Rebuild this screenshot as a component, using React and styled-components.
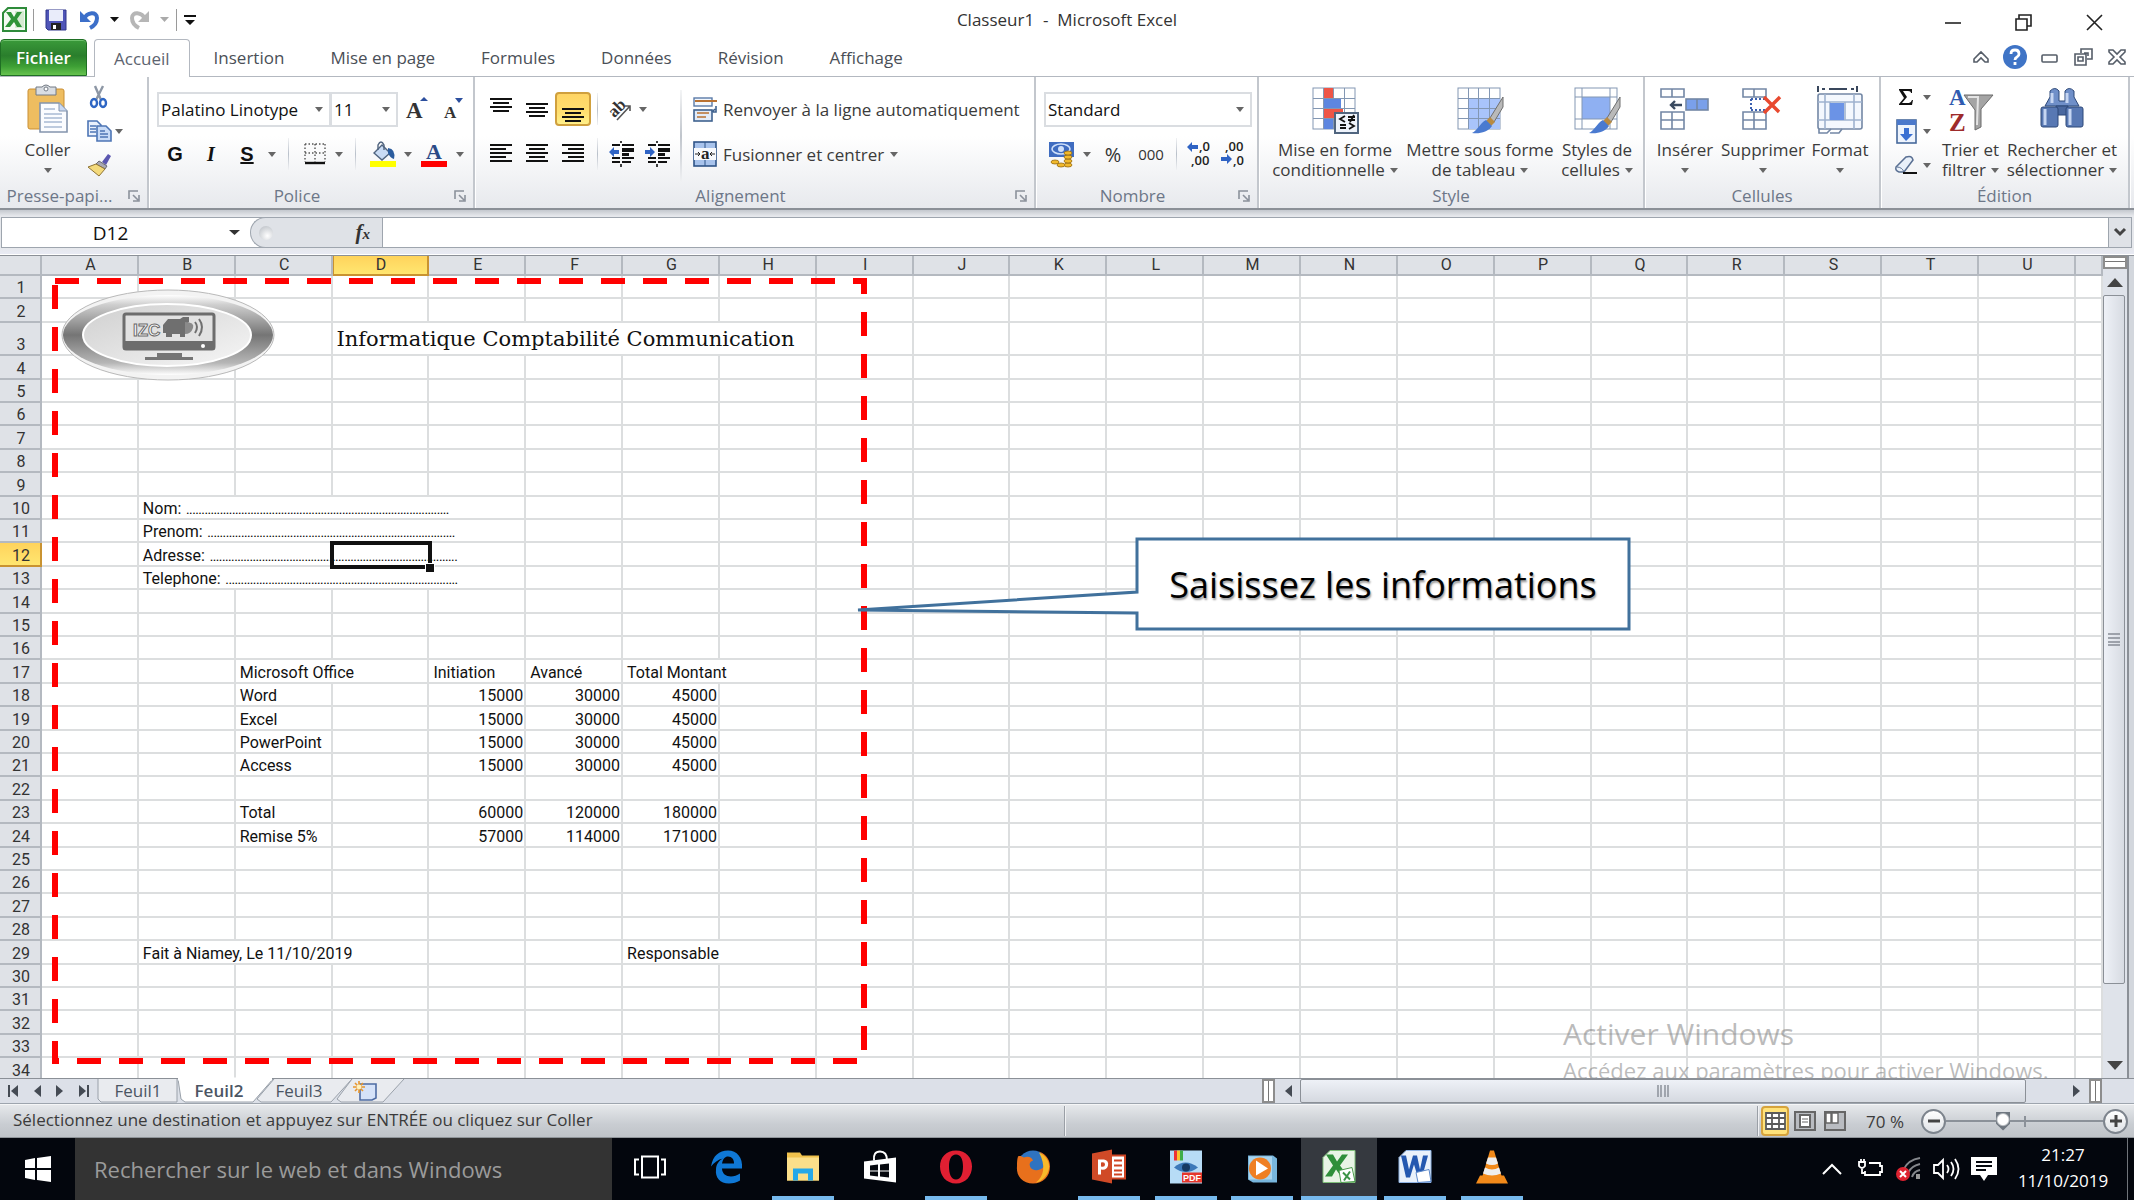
import React from "react";
import styled, { createGlobalStyle, css } from "styled-components";

const ui = `"Open Sans", "Noto Sans", sans-serif`;
const sheetFont = `Roboto, "Liberation Sans", sans-serif`;
const C = {
  ink: "#3b3b3b", label: "#6d7788", line: "#8b9097", chrome: "#dfe2e7",
  grid: "#dcdedf", headLine: "#9ea5ae", gold: "#ffd75e", goldEdge: "#c99331",
};

const GlobalStyle = createGlobalStyle`
  * { box-sizing: border-box; }
  body { margin: 0; background: #fff; font-family: ${ui}; font-size: 17px; color: ${C.ink}; }
  button, input, select { font: inherit; color: inherit; margin: 0; padding: 0; border: 0; background: none; border-radius: 0; }
  svg { display: block; flex: none; overflow: visible; }
`;

/* ---------- shell ---------- */
const Shell = styled.div`
  height: 100vh; display: flex; flex-direction: column; overflow: hidden;
`;
const TitleBar = styled.header`
  height: 39px; display: grid; grid-template-columns: 1fr auto 1fr; align-items: center;
`;
const QuickBar = styled.div`
  display: flex; align-items: center; height: 36px; padding-left: 2px;
`;
const QuickBtn = styled.button`
  width: ${(p) => p.$w}px; height: 30px; display: flex; align-items: center; justify-content: center;
`;
const QuickRule = styled.span`
  width: 1px; height: 22px; background: #9a9a9a; margin: 0 6px;
`;
const Title = styled.h1`
  margin: 0; font-size: 17px; font-weight: 400; color: #333; white-space: pre; line-height: 24px;
`;
const WinButtons = styled.div`
  display: flex; justify-content: flex-end; padding: 6px 4px 0 0;
`;
const WinBtn = styled.button`
  width: 71px; height: 32px; display: flex; align-items: center; justify-content: center;
`;
const TabStrip = styled.nav`
  height: 38px; display: flex; align-items: flex-end; border-bottom: 1px solid #b3b8c0;
`;
const FileTab = styled.button`
  width: 87px; height: 37px; border-radius: 4px 4px 0 0; border: 1px solid #1f6f24; color: #fff; font-weight: 600;
  background: linear-gradient(#3a9a3a 0%, #2a7e2c 45%, #3d9f35 75%, #66c24e 100%);
  box-shadow: inset 0 1px 0 #6cc06a; margin-right: 7px;
`;
const RibbonTab = styled.button`
  height: 37px; padding: 0 23px; color: #4a4f57;
  ${(p) => p.$on && css`
    padding: 0 19px; margin-right: 1px; background: #fff; border: 1px solid #b3b8c0; border-bottom: 0;
    border-radius: 4px 4px 0 0; margin-bottom: -1px; height: 38px; color: #5d6470;
  `}
`;
const TabTools = styled.div`
  margin-left: auto; display: flex; align-items: center; height: 38px; padding-right: 0;
`;
const TabTool = styled.button`
  width: 34px; height: 30px; display: flex; align-items: center; justify-content: center;
`;

/* ---------- ribbon ---------- */
const Ribbon = styled.section`
  height: 133px; display: flex; border-bottom: 2px solid ${C.line};
  background: linear-gradient(#ffffff 0%, #ffffff 45%, #e7e9ed 100%);
`;
const Group = styled.section`
  width: ${(p) => p.$w}px; display: flex; flex-direction: column; flex: none;
  border-right: 2px solid #c3c7cd; box-shadow: 1px 0 0 #fff;
`;
const GroupBody = styled.div`
  height: 106px; display: flex; padding-left: ${(p) => p.$pad || 0}px;
`;
const GroupFoot = styled.footer`
  flex: 1; display: flex; align-items: center; padding: 0 5px; color: ${C.label}; line-height: 22px;
  h2 { margin: 0; font-size: 17px; font-weight: 400; flex: 1; text-align: center; white-space: nowrap; }
  button { flex: none; padding: 0 2px 0 14px; }
`;
const Rows = styled.div`
  display: flex; flex-direction: column; gap: 11px; padding-top: 15px;
`;
const Row = styled.div`
  display: flex; align-items: center; height: 34px;
`;
const Tool = styled.button`
  width: ${(p) => p.$w || 36}px; height: 34px; display: flex; align-items: center; justify-content: center; flex: none;
  ${(p) => p.$on && css`
    border: 2px solid #d0a03e; border-radius: 4px; background: linear-gradient(#ffd565, #ffdf70 60%, #fff08a);
  `}
`;
const CaretBox = styled.button`
  width: 14px; height: 34px; display: flex; align-items: center; justify-content: center; flex: none;
`;
const Rule = styled.span`
  width: 1px; height: 32px; margin: 0 ${(p) => p.$m}px; background: linear-gradient(#f0f1f3, #b9c0ca, #f0f1f3);
`;
const TallRule = styled.span`
  width: 2px; height: 92px; margin: 13px 4px 0; background: linear-gradient(#f4f5f6, #c0c5cc, #f0f1f3);
`;
const Combo = styled.label`
  width: ${(p) => p.$w}px; height: 35px; display: flex; align-items: center; border: 2px solid #dadde1; background: #fff;
  padding-right: 6px;
  & + & { margin-left: -1px; }
  select { flex: 1; min-width: 0; height: 31px; padding-left: 2px; appearance: none; color: #111; outline: 0; }
`;
const WideTool = styled.button`
  height: 34px; display: flex; align-items: center; gap: 6px; padding-left: 7px; white-space: nowrap;
`;
const Big = styled.button`
  width: ${(p) => p.$w}px; height: 106px; padding-top: 8px; display: flex; flex-direction: column; align-items: center;
  line-height: 20px; white-space: nowrap; flex: none;
  svg:first-child { margin-bottom: 7px; }
`;
const BigLine = styled.span`
  display: flex; align-items: center; gap: 5px; height: 20px;
  svg:first-child { margin-bottom: 0; }
`;
const MiniCol = styled.div`
  display: flex; flex-direction: column; padding-top: 3px; width: ${(p) => p.$w}px;
`;
const Letter = styled.span`
  font-size: 20px; line-height: 22px; color: #111;
  font-weight: ${(p) => (p.$bold ? 700 : 400)}; font-style: ${(p) => (p.$italic ? "italic" : "normal")};
  font-family: ${(p) => (p.$italic ? `"Liberation Serif", serif` : `"Liberation Sans", sans-serif`)};
  text-decoration: ${(p) => (p.$under ? "underline" : "none")};
`;
const NumLetter = styled.span`
  font-size: ${(p) => p.$s || 17}px; color: #333;
`;

/* ---------- formula bar ---------- */
const FormulaBar = styled.section`
  display: flex; height: 45px; padding: 7px 2px 6px 1px; background: linear-gradient(#c4c8ce, #e6e8ec 6px, #e6e8ec 38px, #e8eaf4);
  border-bottom: 1px solid #fff;
`;
const NameBox = styled.div`
  display: flex; width: 249px; border: 1px solid ${C.headLine}; border-right: 0; background: #fff; align-items: center;
  input { width: 217px; text-align: center; color: #111; outline: 0; font-size: 19px; }
  button { width: 32px; display: flex; justify-content: center; }
`;
const FxBack = styled.div`
  background: #fff; display: flex; border-top: 1px solid ${C.headLine}; border-bottom: 1px solid ${C.headLine};
`;
const FxBox = styled.div`
  width: 132px; border: 1px solid ${C.headLine}; border-right: 0; background: ${C.chrome}; border-radius: 17px 0 0 17px;
  display: flex; align-items: center; justify-content: space-between; padding: 0 12px 0 8px; margin: -1px 0;
`;
const Knob = styled.span`
  width: 14px; height: 14px; border-radius: 50%; background: radial-gradient(circle at 60% 70%, #fff, #b4b9c0);
`;
const FxBtn = styled.button`
  font-family: "Liberation Serif", serif; font-style: italic; font-weight: 700; font-size: 21px; line-height: 28px; color: #333;
  small { font-size: 15px; }
`;
const FormulaInput = styled.input`
  flex: 1; border: 1px solid ${C.headLine} !important; background: #fff !important; padding: 0 8px !important; outline: 0;
`;
const Expand = styled.button`
  width: 23px; border: 1px solid ${C.headLine} !important; border-left: 0 !important; background: ${C.chrome} !important;
  display: flex; align-items: center; justify-content: center;
`;

/* ---------- sheet ---------- */
const Work = styled.main`
  flex: 1; min-height: 0; display: flex; border-top: 1px solid ${C.line};
`;
const Sheet = styled.div`
  flex: 1; min-width: 0; position: relative; overflow: hidden; background: #fff;
`;
const Table = styled.table`
  width: 100%; table-layout: fixed; border-collapse: separate; border-spacing: 0; font-family: ${sheetFont}; font-size: 16px;
  line-height: 19px; color: #111;
  col.num { width: 42px; } col.rest { width: 27px; }
  thead tr { height: 20px; }
  tbody tr { height: 23px; }
  tbody tr:nth-child(5n + 2), tbody tr:nth-child(5n + 4) { height: 24px; }
  tbody tr:nth-child(3) { height: 33px; }
`;
const Head = styled.th`
  padding: 0 0 0 2px; font-weight: 400; color: #333; background: ${(p) => (p.$on ? "linear-gradient(#ffd35c, #ffe670)" : C.chrome)};
  border-right: 2px solid ${(p) => (p.$on ? C.goldEdge : "#b4b9c0")};
  border-bottom: 2px solid ${(p) => (p.$on ? C.goldEdge : "#b4b9c0")};
  vertical-align: bottom; line-height: 18px;
  ${(p) => p.$on && p.scope === "col" && css`box-shadow: inset 1px 0 0 ${C.goldEdge};`}
`;
const Cell = styled.td`
  padding: 0 4px; border-right: 2px solid ${C.grid}; border-bottom: 2px solid ${C.grid};
  text-align: ${(p) => (p.$num ? "right" : "left")}; white-space: nowrap; vertical-align: bottom;
  ${(p) => p.$num && css`padding-right: 1px;`}
  ${(p) => p.$big && css`font-family: "DejaVu Serif", serif; font-size: 21px; line-height: 29px;`}
`;
const Leader = styled.span`
  font-size: 11px; line-height: 1; font-weight: 500; margin-left: 5px; color: #000;
`;
const Cursor = styled.div`
  position: absolute; left: 330px; top: 285px; width: 102px; height: 28px; border: 4px solid #111;
`;
const CursorGrip = styled.i`
  position: absolute; right: -6px; bottom: -7px; width: 8px; height: 8px; background: #111; outline: 1px solid #fff;
`;
const Emblem = styled.div`
  position: absolute; left: 60px; top: 32px;
`;
const Frame = styled.svg`
  position: absolute; left: 50px; top: 20px;
`;
const Callout = styled.aside`
  position: absolute; left: 856px; top: 281px; width: 776px; height: 94px;
  svg { position: absolute; inset: 0; }
  p { position: absolute; inset: 0 0 0 278px; margin: 0; display: flex; align-items: center; justify-content: center;
    font-size: 36px; color: #000; text-shadow: 1px 2px 2px rgba(0,0,0,.4); font-family: "Open Sans", sans-serif; }
`;
const Watermark = styled.div`
  position: absolute; left: 1563px; top: 756px; color: rgba(120,120,120,.5); white-space: nowrap;
  strong { display: block; font-weight: 400; font-size: 30px; line-height: 44px; }
  span { display: block; font-size: 22px; line-height: 28px; }
`;

/* ---------- scroll bars ---------- */
const VBar = styled.div`
  width: 26px; display: flex; flex-direction: column; background: #dfe3ea; border-right: 2px solid ${C.line};
`;
const Margin = styled.div`width: 5px; background: #d3d7dd;`;
const ScrollBtn = styled.button`
  width: ${(p) => p.$w}px; height: ${(p) => p.$h}px; display: flex; align-items: center; justify-content: center; flex: none;
`;
const VSplit = styled.span`height: 13px; border: 2px solid #8d8d8d; background: linear-gradient(#fff 0 3px, #777 3px 4px, #fff 4px);`;
const VTrack = styled.div`flex: 1; display: flex; flex-direction: column;`;
const VThumb = styled.button`
  flex: 0 0 91%; margin-right: 2px; border: 1px solid ${C.line} !important; border-radius: 2px !important;
  background: linear-gradient(90deg, #eef1f7, #d7dbe2) !important; display: flex; align-items: center; justify-content: center;
`;
const SheetBar = styled.section`
  height: 26px; display: flex; background: #dce0e8; border-top: 1px solid ${C.line}; border-bottom: 1px solid ${C.headLine};
`;
const NavSet = styled.div`display: flex; width: 98px; padding-left: 2px;`;
const SheetTab = styled.button`
  position: relative; width: ${(p) => p.$w}px; height: 24px; line-height: 22px;
  color: #4b5563; font-weight: ${(p) => (p.$on ? 600 : 400)};
  z-index: ${(p) => (p.$on ? 1 : 0)};
  svg { position: absolute; inset: 0; z-index: -1; }
  isolation: isolate;
`;
const HScroll = styled.div`
  margin-left: auto; width: 872px; display: flex; padding-right: 32px; align-items: stretch;
`;
const HSplit = styled.span`width: 13px; flex: none; border: 2px solid #8d8d8d; background: linear-gradient(90deg, #fff 0 4px, #777 4px 5px, #fff 5px);`;
const HTrack = styled.div`flex: 1; display: flex;`;
const HThumb = styled.button`
  flex: 0 0 95%; border: 1px solid ${C.line} !important; border-radius: 2px !important; background: linear-gradient(#eef1f7, #d5d9e0) !important;
  display: flex; align-items: center; justify-content: center;
`;

/* ---------- status bar ---------- */
const Status = styled.footer`
  height: 34px; display: flex; align-items: center; padding-left: 13px; background: linear-gradient(#e6e8eb, #c9cdd2 60%, #bfc3c8);
  border-top: 1px solid #f5f6f7; border-bottom: 1px solid #8f9499;
`;
const StatusText = styled.span`width: 1051px; line-height: 22px; padding-bottom: 2px;`;
const StatusRule = styled.span`width: 2px; height: 30px; border-left: 1px solid #9a9fa6; border-right: 1px solid #f0f1f3;`;
const Views = styled.div`margin-left: auto; display: flex; align-items: center; gap: 2px;`;
const ViewBtn = styled.button`
  width: 28px; height: 30px; display: flex; align-items: center; justify-content: center;
  ${(p) => p.$on && css`border: 2px solid #d6a33c !important; border-radius: 4px !important; background: #ffe27a !important;`}
`;
const ZoomText = styled.button`width: 72px; text-align: center;`;
const ZoomSet = styled.div`display: flex; align-items: center; width: 213px; padding-right: 6px;`;
const Round = styled.button`
  width: 25px; height: 25px; border: 2px solid #7d848d !important; border-radius: 50% !important;
  background: linear-gradient(#fff, #dfe2e6) !important; display: flex; align-items: center; justify-content: center; flex: none;
`;
const Slider = styled.input`
  flex: 1; min-width: 0; appearance: none; height: 24px;
  background: linear-gradient(#8b9199, #8b9199) center / 100% 2px no-repeat,
    linear-gradient(#8b9199, #8b9199) 50% 50% / 2px 11px no-repeat !important;
  &::-webkit-slider-thumb { appearance: none; width: 14px; height: 19px;
    clip-path: polygon(0 0, 100% 0, 100% 65%, 50% 100%, 0 65%);
    background: radial-gradient(circle at 50% 40%, #fff 0 5px, #6f7780 7px); }
`;

/* ---------- taskbar ---------- */
const Taskbar = styled.footer`height: 62px; display: flex; background: #03060d; color: #fff;`;
const Start = styled.button`width: 75px; display: flex; align-items: center; justify-content: center;`;
const Search = styled.input`
  width: 537px; padding: 0 19px !important; background: #333 !important; font-size: 22px !important; outline: 0;
  &::placeholder { color: #9b9b9b; opacity: 1; }
`;
const Apps = styled.div`display: grid; grid-template-columns: repeat(12, 1fr); width: 918px;`;
const AppButton = styled.button`
  display: grid; grid-template-rows: 1fr 4px; justify-items: center; align-items: center;
  background: ${(p) => (p.$on ? "#35393f" : "none")};
  i { width: ${(p) => (p.$on ? "100%" : "62px")}; height: 4px; background: ${(p) => (p.$run ? "#76b9ed" : "transparent")}; }
`;
const Tray = styled.div`margin-left: auto; display: flex; align-items: center;`;
const TrayBtn = styled.button`width: 38px; height: 44px; display: flex; align-items: center; justify-content: center;`;
const Clock = styled.time`width: 124px; text-align: center; line-height: 26px; padding: 0 4px 2px 0;`;
const Desk = styled.span`width: 7px; align-self: stretch; border-left: 1px solid #70747a;`;

/* ---------- small drawings ---------- */
const Caret = ({ c = "#666", s = 8 }) => (
  <svg width={s} height="5" viewBox="0 0 8 5" preserveAspectRatio="none"><path d="M0 0h8L4 5z" fill={c} /></svg>
);
const Lines = ({ w, x = [], top = 0 }) => (
  <svg width="22" height="26">{w.map((n, i) => (
    <rect key={i} x={x[i] ?? (22 - n) / 2} y={top + i * 4} width={n} height="2" fill="#111" />
  ))}</svg>
);
const Launcher = () => (
  <svg width="12" height="12" fill="none" stroke="#8b919b" strokeWidth="1.6"><path d="M1 9V1h9M5 5l5 5M11 5v6H5" /></svg>
);
const Arrow = ({ right, bar }) => (
  <svg width="12" height="14" viewBox="0 0 12 14">
    <g transform={right ? "rotate(180 6 7)" : undefined}>
      <path d="M10 1v12L3 7z" fill="#454b54" />{bar && <path d="M0 1h2v12H0z" fill="#454b54" />}
    </g>
  </svg>
);
const UpDown = ({ down }) => (
  <svg width="16" height="9">{down ? <path d="M0 0h16L8 9z" fill="#444" /> : <path d="M0 9h16L8 0z" fill="#444" />}</svg>
);
const XlLogo = ({ s = 25 }) => (
  <svg width={s} height={s} viewBox="0 0 25 25">
    <path d="M6 1h18v23H1V6z" fill="#f4faf3" stroke="#2e8b3a" strokeWidth="2" />
    <path d="M13 4h9v17h-9z" fill="#d6ead2" />
    <path d="M4 5h5l3 5 3-5h5l-5 7 5 8h-5l-3-5-4 5H3l6-8z" fill="#2f9438" />
  </svg>
);
const GridArt = ({ kind }) => (
  <svg width="48" height="48">
    <rect x="2" y="3" width="42" height="41" fill="#fff" stroke="#8397b3" />
    {kind === "table" && <rect x="12" y="13" width="32" height="31" fill="#a9c4fb" />}
    {kind === "styles" && <rect x="9" y="12" width="28" height="22" fill="#8fb0f2" />}
    <path d={kind === "styles" ? "M9 3v41M37 3v41M2 12h42M2 34h42" : "M12.5 3v41M22.5 3v41M33.5 3v41M2 13.5h42M2 23.5h42M2 33.5h42"} stroke="#8397b3" fill="none" />
    {kind === "cond" ? (
      <g>
        <path d="M13 3h9v10h-9zM13 24h19v9H13z" fill="#ee5546" />
        <path d="M13 14h17v9H13zM13 34h9v10h-9z" fill="#5d86e0" />
        <rect x="24" y="28" width="23" height="20" fill="#eef3fb" stroke="#50657f" strokeWidth="2" />
        <path d="M34 31l-5 3 5 3M29 40h6M29 43h6M37 32h7M37 35h7M43 30l-4 7M38 38l5 3-5 3" stroke="#111" strokeWidth="1.8" fill="none" />
      </g>
    ) : (
      <g>
        <path d="M47 12L34 33l4 4 9-15z" fill="#b9b9b9" stroke="#6e6e6e" />
        <path d="M34 32l5 5-4 4-5-5z" fill="#b88a42" />
        <path d="M30 35l6 6c-4 6-12 8-20 7 5-2 8-10 14-13z" fill="#4a7ad0" />
      </g>
    )}
  </svg>
);
const CellsArt = ({ kind }) => (
  <svg width="50" height="48" fill="none" stroke="#7387a5" strokeWidth="1.6">
    {kind === "format" ? (
      <g>
        <rect x="3" y="9" width="44" height="35" rx="2" fill="#f4f8fe" />
        <path d="M10 9v35M39 9v35M3 17h44M3 35h44M15 17v18M30 17v18" stroke="#9fb2cf" />
        <rect x="15" y="18" width="14" height="17" fill="#6b93e6" stroke="none" />
        <path d="M4 44v4h8l4-4M15 48h9l3-4" />
        <path d="M3 1v6M42 1v6M14 4h18M7 4h3M36 4h3" stroke="#39475c" strokeWidth="2" />
      </g>
    ) : (
      <g transform={kind === "del" ? "translate(4)" : ""}>
        <path d="M1 4h23v8H1zM12 4v8M1 27h23v17H1zM12 27v17M1 35h23" fill="#fff" />
        {kind === "ins" ? (
          <g><rect x="26" y="14" width="22" height="11" fill="#7aa0ea" /><path d="M37 14v11" /><path d="M22 20H11M15 16l-4 4 4 4" stroke="#3a4a60" strokeWidth="2.4" /></g>
        ) : (
          <g><path d="M9 14h16M9 25h16M9 14v11" strokeDasharray="2 2" stroke="#3a5fb0" strokeWidth="2" /><path d="M22 12l15 15M38 12L22 28" stroke="#e8492f" strokeWidth="3.4" /></g>
        )}
      </g>
    )}
  </svg>
);

const cols = "ABCDEFGHIJKLMNOPQRSTU".split("");
const dots = (n) => ".".repeat(n);
const t = (v, span = 1, extra = {}) => ({ v, span, ...extra });
const n = (v) => ({ v, span: 1, num: true });
const cells = {
  3: { D: t("Informatique Comptabilité Communication", 5, { big: true }) },
  10: { B: t("Nom:", 4, { lead: 86 }) },
  11: { B: t("Prenom:", 4, { lead: 81 }) },
  12: { B: t("Adresse:", 4, { lead: 81 }) },
  13: { B: t("Telephone:", 4, { lead: 76 }) },
  17: { C: t("Microsoft Office", 2), E: t("Initiation"), F: t("Avancé"), G: t("Total Montant", 2) },
  18: { C: t("Word"), E: n(15000), F: n(30000), G: n(45000) },
  19: { C: t("Excel"), E: n(15000), F: n(30000), G: n(45000) },
  20: { C: t("PowerPoint"), E: n(15000), F: n(30000), G: n(45000) },
  21: { C: t("Access"), E: n(15000), F: n(30000), G: n(45000) },
  23: { C: t("Total"), E: n(60000), F: n(120000), G: n(180000) },
  24: { C: t("Remise 5%"), E: n(57000), F: n(114000), G: n(171000) },
  29: { B: t("Fait à Niamey, Le 11/10/2019", 3), G: t("Responsable", 2) },
};

function SheetRow({ index }) {
  const row = cells[index] || {};
  const out = [];
  for (let i = 0; i < cols.length; ) {
    const c = row[cols[i]];
    out.push(
      <Cell key={i} colSpan={c ? c.span : 1} $num={c && c.num} $big={c && c.big}>
        {c && c.v}{c && c.lead && <Leader>{dots(c.lead)}</Leader>}
      </Cell>
    );
    i += c ? c.span : 1;
  }
  return <tr><Head scope="row" $on={index === 12}>{index}</Head>{out}<Cell /></tr>;
}

const Logo = () => (
  <svg width="216" height="94" viewBox="0 0 216 94" role="img" aria-label="IZC">
    <defs>
      <linearGradient id="ring" x1="0" x2="0" y1="0" y2="1">
        <stop offset="0" stopColor="#fff" /><stop offset=".12" stopColor="#cfcfcf" /><stop offset=".5" stopColor="#757575" />
        <stop offset=".85" stopColor="#b6b6b6" /><stop offset="1" stopColor="#fff" />
      </linearGradient>
      <linearGradient id="plate" x1="0" x2="1" y1="0" y2="1">
        <stop offset="0" stopColor="#cfcfcf" /><stop offset="1" stopColor="#f6f6f6" />
      </linearGradient>
    </defs>
    <ellipse cx="108" cy="47" rx="106" ry="45" fill="#f3f3f3" stroke="#b9b9b9" />
    <ellipse cx="108" cy="47" rx="105" ry="40" fill="url(#ring)" />
    <ellipse cx="107" cy="47" rx="84" ry="31" fill="url(#plate)" stroke="#fff" strokeWidth="2" />
    <rect x="64" y="26" width="90" height="35" rx="2" fill="#e2e2e2" stroke="#6d6d6d" strokeWidth="3" />
    <path d="M63 53h92v7q0 2-3 2H66q-3 0-3-2z" fill="#6d6d6d" /><circle cx="143" cy="58" r="2" fill="#fff" />
    <path d="M97 65h25v4h11v3H85v-3h12z" fill="#757575" />
    <text x="73" y="48" fontFamily="Liberation Sans" fontWeight="700" fontSize="17" fill="#fff" stroke="#6a6a6a" strokeWidth="1">IZC</text>
    <path d="M103 37l5-6h12l3-2h6v5l-4 3v12h-5v-3h-8v3h-6v-4h-3z" fill="#6f6f6f" />
    <path d="M125 34q10 0 8 6t-8 6z" fill="#8a8a8a" />
    <path d="M135 34q4 5 0 11M139 31q6 8 0 17" fill="none" stroke="#707070" strokeWidth="2" />
  </svg>
);

const apps = [
  ["Affichage des tâches", 0, <g fill="none" stroke="#fff" strokeWidth="2"><rect x="9" y="7" width="16" height="21" /><path d="M6 10H2v15h4M28 10h4v15h-4" /></g>],
  ["Edge", 0, <path d="M1 17C3 6 9 1 18 1c9 0 15 7 14 18H12c0 5 4 8 9 8 3 0 6-1 9-3v7c-3 2-7 3-11 3C10 34 5 28 6 20c0-5 3-9 7-11-5 1-9 4-12 8zm11-3h12c0-4-2-7-6-7-3 0-5 2-6 7z" fill="#0f78d6" />],
  ["Explorateur de fichiers", 1, <g><path d="M1 3h13l2 3h17v25H1z" fill="#f0c14c" /><path d="M1 8h32v23H1z" fill="#fbdf8a" /><path d="M7 19h20v12h-5v-7h-10v7H7z" fill="#25a8e8" /></g>],
  ["Store", 0, <g><path d="M11 11q-1-9 6-9t7 9" fill="none" stroke="#fff" strokeWidth="2" /><path d="M1 12l32-4v25L1 29z" fill="#fff" /><path d="M7 16l8-1v6H7zM17 15l9-1v7h-9zM7 22h8v5l-8-1zM17 22h9v6l-9-1z" fill="#05080e" /></g>],
  ["Opera", 1, <path fillRule="evenodd" d="M17 1c10 0 16 7 16 16s-6 17-16 17S1 26 1 17 7 1 17 1zm0 4c-5 0-7 5-7 12s2 13 7 13 7-6 7-13-2-12-7-12z" fill="#e01f32" />],
  ["Firefox", 0, <g><circle cx="17" cy="17" r="16" fill="#2f73c0" /><path d="M2 7c2-1 4 0 6 1 4-2 8 0 9 3-3 1-4 3-3 6 2 5 10 5 14 0 2-6-1-12-5-15 8 3 11 9 11 15 0 10-7 17-17 17S0 27 1 17c0-4 0-7 1-10z" fill="#e8701c" /><path d="M23 3c7 3 11 9 10 16-1 7-7 13-13 14 8-6 10-17 3-30z" fill="#f8b92a" /></g>],
  ["PowerPoint", 1, <g><rect x="18" y="6" width="15" height="23" fill="#fff" stroke="#cf4423" strokeWidth="2" /><path d="M22 11h8M22 16h8M22 21h8M22 25h8" stroke="#cf4423" strokeWidth="2" /><path d="M0 4l20-4v34L0 30z" fill="#d04a27" /><path d="M6 10h6q5 1 4 6t-7 4v5H6zm3 3v4q4 1 4-2t-4-2z" fill="#fff" /></g>],
  ["PDF", 1, <g><rect x="1" y="1" width="32" height="33" fill="#b7dcf6" /><path d="M5 1h3v10H5z" fill="#e33" /><path d="M8 1h3v10H8z" fill="#f7c52c" /><path d="M11 1h3v10h-3z" fill="#3fae49" /><path d="M5 18q11-10 24 0-12 9-24 0z" fill="#3c79b9" /><circle cx="17" cy="18" r="4" fill="#173a63" /><rect x="13" y="23" width="20" height="10" fill="#e6362b" /><text x="14" y="31" fontSize="9" fontWeight="700" fontFamily="Liberation Sans" fill="#fff">PDF</text></g>],
  ["Lecteur multimédia", 1, <g><path d="M3 6h25l4 3v24H8l-5-3z" fill="#78b6dd" /><rect x="4" y="7" width="23" height="23" fill="#a9d4ee" /><circle cx="15" cy="19" r="11" fill="#ef7f23" /><path d="M11 11v15l12-7z" fill="#fff" /></g>],
  ["Excel", 2, <g><path d="M8 1h25v32H1V8z" fill="#e8f4e5" stroke="#7fbf7a" /><path d="M4 5h7l4 7 5-7h6l-8 11 8 11h-7l-5-7-4 7H3l8-11z" fill="#2f8f3a" /><path d="M17 21l13-3 3 14-14 1z" fill="#fff" stroke="#4c9d4e" /><path d="M21 23l7 7M28 22l-6 9" stroke="#3c9447" strokeWidth="2" /></g>],
  ["Word", 1, <g><path d="M8 1h25v32H1V8z" fill="#e9f1fb" stroke="#8fb3e3" /><path d="M3 6h5l3 14 4-14h4l3 14 3-14h5l-6 22h-4l-4-13-4 13H8z" fill="#2458b0" /><path d="M18 23l13-3 2 12-13 1z" fill="#fff" stroke="#5b87c9" /></g>],
  ["VLC", 1, <g><path d="M5 26h24l4 8H1z" fill="#f28a1a" /><path d="M15 1h4l8 27q-10 5-20 0z" fill="#f28a1a" /><path d="M13 8h8l2 6q-6 3-12 0zM10 18q7 4 14 0l2 6q-9 4-18 0z" fill="#eee" /></g>],
];

export default function App() {
  return (
    <Shell>
      <GlobalStyle />
      <TitleBar>
        <QuickBar>
          <XlLogo />
          <QuickRule />
          <QuickBtn $w={32} aria-label="Enregistrer">
            <svg width="22" height="22"><path d="M1 1h20v20H3l-2-2z" fill="#4f55b8" stroke="#30368c" /><rect x="4" y="1" width="14" height="11" fill="#e9ecfa" /><rect x="6" y="14" width="10" height="7" fill="#222" /><rect x="8" y="16" width="3" height="4" fill="#fff" /></svg>
          </QuickBtn>
          <QuickBtn $w={36} aria-label="Annuler">
            <svg width="22" height="22" fill="none" stroke="#3c6fc9" strokeWidth="4"><path d="M5 10C8 3 18 2 18 9c0 4-3 8-7 10" /><path d="M1 2v11h11z" fill="#3c6fc9" stroke="none" /></svg>
          </QuickBtn>
          <QuickBtn $w={12} aria-label="Liste d'annulation"><Caret c="#111" s={9} /></QuickBtn>
          <QuickBtn $w={38} aria-label="Rétablir">
            <svg width="22" height="22" fill="none" stroke="#b6b6b6" strokeWidth="4"><path d="M17 10C14 3 4 2 4 9c0 4 3 8 7 10" /><path d="M21 2v11H10z" fill="#b6b6b6" stroke="none" /></svg>
          </QuickBtn>
          <QuickBtn $w={12} aria-label="Liste de rétablissement"><Caret c="#aaa" s={9} /></QuickBtn>
          <QuickRule />
          <QuickBtn $w={14} aria-label="Personnaliser">
            <svg width="12" height="12"><path d="M0 1h12v2H0zM1 6h10l-5 5z" fill="#111" /></svg>
          </QuickBtn>
        </QuickBar>
        <Title>{"Classeur1  -  Microsoft Excel"}</Title>
        <WinButtons>
          <WinBtn aria-label="Réduire"><svg width="16" height="16"><path d="M0 8h16" stroke="#222" strokeWidth="1.6" /></svg></WinBtn>
          <WinBtn aria-label="Restaurer"><svg width="17" height="17" fill="none" stroke="#222" strokeWidth="1.6"><path d="M1 5h11v11H1zM4 5V1h12v11h-4" /></svg></WinBtn>
          <WinBtn aria-label="Fermer"><svg width="17" height="17"><path d="M1 1l15 15M16 1L1 16" stroke="#222" strokeWidth="1.6" /></svg></WinBtn>
        </WinButtons>
      </TitleBar>

      <TabStrip>
        <FileTab>Fichier</FileTab>
        <RibbonTab $on>Accueil</RibbonTab>
        {["Insertion", "Mise en page", "Formules", "Données", "Révision", "Affichage"].map((s) => <RibbonTab key={s}>{s}</RibbonTab>)}
        <TabTools>
          <TabTool aria-label="Réduire le ruban"><svg width="16" height="14" fill="none" stroke="#555d68" strokeWidth="1.6"><path d="M1 9l7-7 7 7v3h-3l-4-4-4 4H1z" /></svg></TabTool>
          <TabTool aria-label="Aide"><svg width="26" height="26"><circle cx="13" cy="13" r="12" fill="#3f74c6" /><path d="M9 10q0-4 4-4t4 4q0 2-2 3t-2 3M13 18v3" stroke="#fff" strokeWidth="2.8" fill="none" /></svg></TabTool>
          <TabTool aria-label="Réduire la fenêtre"><svg width="17" height="18"><rect x="1" y="7" width="15" height="7" rx="1" fill="none" stroke="#555d68" strokeWidth="1.6" /></svg></TabTool>
          <TabTool aria-label="Restaurer la fenêtre"><svg width="19" height="18" fill="none" stroke="#555d68" strokeWidth="1.6"><path d="M1 6h11v11H1zM4 9h5v4H4zM7 5V1h11v10h-5M10 5h4v3" /></svg></TabTool>
          <TabTool aria-label="Fermer la fenêtre"><svg width="18" height="16" fill="none" stroke="#555d68" strokeWidth="1.6"><path d="M1 1h4l4 4 4-4h4v2l-5 5 5 5v2h-4l-4-4-4 4H1v-2l5-5-5-5z" /></svg></TabTool>
        </TabTools>
      </TabStrip>

      <Ribbon>
        <Group $w={149}>
          <GroupBody $pad={9}>
            <Big $w={77}>
              <svg width="44" height="48"><rect x="2" y="4" width="36" height="40" rx="2" fill="#eebd60" stroke="#c98f35" /><path d="M10 2h6q4-4 8 0h6v8H10z" fill="#d9dde2" stroke="#737a84" /><circle cx="20" cy="4" r="2" fill="#fff" stroke="#737a84" /><path d="M14 18h19l8 8v21H14z" fill="#fbfcff" stroke="#8494ad" strokeWidth="1.6" /><path d="M33 18v8h8" fill="#c9d9f3" stroke="#8494ad" /><path d="M18 24h11M18 29h18M18 33h18M18 37h18M18 42h18" stroke="#a9b9d4" strokeWidth="1.6" /></svg>
              <BigLine>Coller</BigLine><BigLine><Caret /></BigLine>
            </Big>
            <MiniCol $w={50}>
              <Row><Tool $w={26} aria-label="Couper"><svg width="18" height="24" fill="none"><path d="M5 1l6 14M13 1L6 15" stroke="#8d97a5" strokeWidth="2.4" /><ellipse cx="4" cy="18" rx="3" ry="4" stroke="#2e66c4" strokeWidth="2.4" /><ellipse cx="13" cy="18" rx="3" ry="4" stroke="#2e66c4" strokeWidth="2.4" /></svg></Tool></Row>
              <Row><Tool $w={26} aria-label="Copier"><svg width="25" height="22" fill="#eaf1fc" stroke="#4d75b5" strokeWidth="1.6"><path d="M1 1h9l4 4v11H1z" /><path d="M3 6h6M3 9h6M3 12h6" /><path d="M10 6h9l5 5v10H10z" fill="#c8dbf7" /><path d="M13 11h5M13 14h8M13 17h8" /></svg></Tool><CaretBox aria-label="Options de copie"><Caret /></CaretBox></Row>
              <Row><Tool $w={26} aria-label="Reproduire la mise en forme"><svg width="25" height="24"><path d="M15 9l6-8 3 2-5 9z" fill="#5b57b0" /><path d="M12 8l8 5-2 3-9-5z" fill="#a9a9b4" stroke="#6b6b75" /><path d="M9 11l9 5-6 7L1 14z" fill="#f4da7c" stroke="#8f7434" /></svg></Tool></Row>
            </MiniCol>
          </GroupBody>
          <GroupFoot><h2>Presse-papi...</h2><button aria-label="Presse-papiers"><Launcher /></button></GroupFoot>
        </Group>

        <Group $w={326}>
          <GroupBody $pad={8}>
            <Rows>
              <Row>
                <Combo $w={174}><select aria-label="Police"><option>Palatino Linotype</option></select><Caret /></Combo>
                <Combo $w={68}><select aria-label="Taille"><option>11</option></select><Caret /></Combo>
                <Tool aria-label="Agrandir la police"><svg width="24" height="26"><text x="2" y="22" fontFamily="Liberation Serif" fontWeight="700" fontSize="23" fill="#333">A</text><path d="M16 5l4-4 4 4z" fill="#2c4f9e" /></svg></Tool>
                <Tool aria-label="Réduire la police"><svg width="22" height="26"><text x="3" y="22" fontFamily="Liberation Serif" fontWeight="700" fontSize="17" fill="#333">A</text><path d="M14 2h8l-4 5z" fill="#2c4f9e" /></svg></Tool>
              </Row>
              <Row>
                <Tool aria-label="Gras"><Letter $bold>G</Letter></Tool>
                <Tool aria-label="Italique"><Letter $italic $bold>I</Letter></Tool>
                <Tool aria-label="Souligné"><Letter $bold $under>S</Letter></Tool>
                <CaretBox aria-label="Options de soulignement"><Caret /></CaretBox>
                <Rule $m={9} />
                <Tool $w={34} aria-label="Bordures"><svg width="22" height="22"><path d="M1 1h20M1 1v18M21 1v18M11 1v18M1 10h20" stroke="#555" strokeWidth="1.4" strokeDasharray="1.5 2" fill="none" /><path d="M1 20h20" stroke="#111" strokeWidth="2.4" /></svg></Tool>
                <CaretBox aria-label="Options de bordure"><Caret /></CaretBox>
                <Rule $m={9} />
                <Tool $w={36} aria-label="Remplissage"><svg width="26" height="26"><path d="M4 12l8-8 8 8-8 7z" fill="#c9dbf4" stroke="#50647f" strokeWidth="1.4" /><path d="M8 9V4q3-6 6 0v5" fill="none" stroke="#50647f" strokeWidth="1.4" /><path d="M18 7q8 1 6 11-4-1-6-6z" fill="#2b5c9e" /><rect y="20" width="26" height="6" fill="#ff0" /></svg></Tool>
                <CaretBox aria-label="Couleurs de remplissage"><Caret /></CaretBox>
                <Tool $w={38} aria-label="Couleur de police"><svg width="26" height="26"><text x="5" y="18" fontFamily="Liberation Serif" fontWeight="700" fontSize="22" fill="#2b4a86">A</text><rect y="20" width="26" height="6" fill="red" /></svg></Tool>
                <CaretBox aria-label="Couleurs de police"><Caret /></CaretBox>
              </Row>
            </Rows>
          </GroupBody>
          <GroupFoot><h2>Police</h2><button aria-label="Options de police"><Launcher /></button></GroupFoot>
        </Group>

        <Group $w={561}>
          <GroupBody $pad={8}>
            <Rows>
              <Row>
                <Tool aria-label="Aligner en haut"><Lines w={[22, 16, 22, 16]} top={2} /></Tool>
                <Tool aria-label="Aligner au centre"><Lines w={[22, 16, 22, 16]} top={7} /></Tool>
                <Tool $on aria-label="Aligner en bas"><Lines w={[22, 16, 22, 16]} top={12} /></Tool>
                <Rule $m={6} />
                <Tool $w={32} aria-label="Orientation"><svg width="26" height="26"><text x="3" y="20" transform="rotate(-45 8 16)" fontFamily="Liberation Serif" fontWeight="700" fontSize="17" fill="#333">ab</text><path d="M10 24L23 10M18 10h5v5" stroke="#555" strokeWidth="1.6" fill="none" /></svg></Tool>
                <CaretBox aria-label="Options d'orientation"><Caret /></CaretBox>
              </Row>
              <Row>
                <Tool aria-label="Aligner à gauche"><Lines w={[22, 16, 22, 16, 22]} x={[0, 0, 0, 0, 0]} top={3} /></Tool>
                <Tool aria-label="Centrer"><Lines w={[22, 16, 22, 16, 22]} top={3} /></Tool>
                <Tool aria-label="Aligner à droite"><Lines w={[22, 16, 22, 16, 22]} x={[0, 6, 0, 6, 0]} top={3} /></Tool>
                <Rule $m={6} />
                {[0, 1].map((k) => (
                  <Tool key={k} aria-label={k ? "Augmenter le retrait" : "Diminuer le retrait"}>
                    <svg width="26" height="26"><path d="M3 4h8M3 17h8M3 21h8M13 4h12M13 17h12M13 21h9" stroke="#111" strokeWidth="2" /><path d="M13 7h12v4H13zM13 12h7v3h-7z" fill="#111" /><path d="M12 0v2M12 23v3" stroke="#111" strokeWidth="1.6" />{k ? <path d="M10 11L5 6v3H0v4h5v3z" fill="#2f63c4" /> : <path d="M0 11l5-5v3h5v4H5v3z" fill="#2f63c4" />}</svg>
                  </Tool>
                ))}
              </Row>
            </Rows>
            <TallRule />
            <Rows>
              <Row><WideTool><svg width="24" height="26"><rect x="1" y="2" width="18" height="8" fill="#f4f8fd" stroke="#5b7ba8" strokeWidth="1.4" /><path d="M2 5h22" stroke="#b97232" strokeWidth="2" /><rect x="1" y="14" width="18" height="11" fill="#e2ecf9" stroke="#3f628f" strokeWidth="1.6" /><path d="M4 17h12M4 21h9" stroke="#b97232" strokeWidth="1.6" /><path d="M23 10v6h-3M22 13l-3 3" stroke="#3f628f" strokeWidth="1.6" fill="none" /></svg>Renvoyer à la ligne automatiquement</WideTool></Row>
              <Row><WideTool><svg width="24" height="26"><rect x="1" y="1" width="22" height="24" fill="#a8c3ec" stroke="#2f5488" strokeWidth="1.6" /><rect x="1" y="7" width="22" height="12" fill="#f7f9fc" /><path d="M12 1v6M12 19v6" stroke="#2f5488" /><text x="8" y="18" fontFamily="Liberation Serif" fontWeight="700" fontSize="17" fill="#222">a</text><path d="M2 13h5M5 11l2 2-2 2M22 13h-5M19 11l-2 2 2 2" stroke="#222" fill="none" /></svg>Fusionner et centrer<Caret /></WideTool></Row>
            </Rows>
          </GroupBody>
          <GroupFoot><h2>Alignement</h2><button aria-label="Options d'alignement"><Launcher /></button></GroupFoot>
        </Group>

        <Group $w={223}>
          <GroupBody $pad={8}>
            <Rows>
              <Row><Combo $w={208}><select aria-label="Format de nombre"><option>Standard</option></select><Caret /></Combo></Row>
              <Row>
                <Tool aria-label="Format monétaire"><svg width="26" height="26"><rect x="0" y="1" width="25" height="15" fill="#3f6cc0" /><ellipse cx="12" cy="8" rx="9" ry="5" fill="none" stroke="#cfe0fa" strokeWidth="1.6" /><circle cx="12" cy="8" r="3" fill="#cfe0fa" /><g fill="#f1b92c" stroke="#96690f" strokeWidth=".8"><ellipse cx="19" cy="24" rx="4" ry="2" /><ellipse cx="19" cy="20" rx="4" ry="2" /><ellipse cx="19" cy="16" rx="4" ry="2" /><ellipse cx="19" cy="12" rx="4" ry="2" /><ellipse cx="6" cy="21" rx="4" ry="2" /><ellipse cx="12" cy="24" rx="4" ry="2" /></g></svg></Tool>
                <CaretBox aria-label="Options monétaires"><Caret /></CaretBox>
                <Tool $w={38} aria-label="Pourcentage"><NumLetter $s={20}>%</NumLetter></Tool>
                <Tool $w={38} aria-label="Milliers"><NumLetter $s={15}>000</NumLetter></Tool>
                <Rule $m={6} />
                <Tool $w={34} aria-label="Ajouter une décimale"><svg width="26" height="28"><text x="12" y="11" fontFamily="Open Sans" fontWeight="600" fontSize="13" fill="#222">,0</text><text x="4" y="25" fontFamily="Open Sans" fontWeight="600" fontSize="13" fill="#222">,00</text><path d="M0 7l5-5v3h6v4H5v3z" fill="#2f63c4" /></svg></Tool>
                <Tool $w={34} aria-label="Réduire les décimales"><svg width="26" height="28"><text x="4" y="11" fontFamily="Open Sans" fontWeight="600" fontSize="13" fill="#222">,00</text><text x="12" y="25" fontFamily="Open Sans" fontWeight="600" fontSize="13" fill="#222">,0</text><path d="M11 19l-5-5v3H0v4h6v3z" fill="#2f63c4" /></svg></Tool>
              </Row>
            </Rows>
          </GroupBody>
          <GroupFoot><h2>Nombre</h2><button aria-label="Options de nombre"><Launcher /></button></GroupFoot>
        </Group>

        <Group $w={386}>
          <GroupBody $pad={9}>
            <Big $w={134}><GridArt kind="cond" /><BigLine>Mise en forme</BigLine><BigLine>conditionnelle<Caret /></BigLine></Big>
            <Big $w={156}><GridArt kind="table" /><BigLine>Mettre sous forme</BigLine><BigLine>de tableau<Caret /></BigLine></Big>
            <Big $w={78}><GridArt kind="styles" /><BigLine>Styles de</BigLine><BigLine>cellules<Caret /></BigLine></Big>
          </GroupBody>
          <GroupFoot><h2>Style</h2></GroupFoot>
        </Group>

        <Group $w={236}>
          <GroupBody $pad={1}>
            <Big $w={78}><CellsArt kind="ins" /><BigLine>Insérer</BigLine><BigLine><Caret /></BigLine></Big>
            <Big $w={78}><CellsArt kind="del" /><BigLine>Supprimer</BigLine><BigLine><Caret /></BigLine></Big>
            <Big $w={76}><CellsArt kind="format" /><BigLine>Format</BigLine><BigLine><Caret /></BigLine></Big>
          </GroupBody>
          <GroupFoot><h2>Cellules</h2></GroupFoot>
        </Group>

        <Group $w={249}>
          <GroupBody $pad={11}>
            <MiniCol $w={48}>
              <Row><Tool $w={28} aria-label="Somme"><svg width="16" height="16"><path d="M1 0h13v4h-1q0-2-3-2H5l4 6-5 6h7q2 0 3-3h1l-1 5H1v-1l5-6-5-8z" fill="#111" /></svg></Tool><CaretBox aria-label="Options de somme"><Caret /></CaretBox></Row>
              <Row><Tool $w={28} aria-label="Recopier"><svg width="21" height="25"><rect x="1" y="1" width="19" height="23" fill="#eef4fd" stroke="#47699c" strokeWidth="1.6" /><rect x="1" y="1" width="19" height="5" fill="#4b79cc" /><path d="M8 9h5v6h4l-7 7-6-7h4z" fill="#3b70d2" /></svg></Tool><CaretBox aria-label="Options de recopie"><Caret /></CaretBox></Row>
              <Row><Tool $w={28} aria-label="Effacer"><svg width="24" height="20"><path d="M2 12L12 2q6-2 7 3l-9 12H5q-4-1-3-5z" fill="#e9f0f9" stroke="#5a7093" strokeWidth="1.5" /><path d="M3 12q5 0 7 5" fill="none" stroke="#5a7093" /><path d="M9 18h14" stroke="#111" strokeWidth="2" /></svg></Tool><CaretBox aria-label="Options d'effacement"><Caret /></CaretBox></Row>
            </MiniCol>
            <Big $w={61}>
              <svg width="46" height="48"><path d="M16 10h29L33 24v18l-6 3V25z" fill="#a4a4a4" stroke="#6b6b6b" /><path d="M20 12h10l-1 28" stroke="#e4e4e4" strokeWidth="2" fill="none" /><text x="1" y="20" fontFamily="Liberation Serif" fontWeight="700" fontSize="23" fill="#2f5bb0">A</text><text x="1" y="46" fontFamily="Liberation Serif" fontWeight="700" fontSize="25" fill="#9e2b2b">Z</text></svg>
              <BigLine>Trier et</BigLine><BigLine>filtrer<Caret /></BigLine>
            </Big>
            <Big $w={122}>
              <svg width="46" height="48" stroke="#2d4878"><path d="M11 6q5-5 9 0v10h6V6q4-5 9 0v6l5 9H6l5-9z" fill="#6f8fc8" /><path d="M17 21h12v9H17z" fill="#4a689f" /><rect x="2" y="22" width="17" height="20" rx="2" fill="#5878b3" /><rect x="27" y="22" width="17" height="20" rx="2" fill="#5878b3" /><path d="M6 24v16M31 24v16M13 8v10M28 8v10" stroke="#c6d6f2" strokeWidth="3" /></svg>
              <BigLine>Rechercher et</BigLine><BigLine>sélectionner<Caret /></BigLine>
            </Big>
          </GroupBody>
          <GroupFoot><h2>Édition</h2></GroupFoot>
        </Group>
      </Ribbon>

      <FormulaBar>
        <NameBox><input aria-label="Zone Nom" defaultValue="D12" /><button aria-label="Noms"><Caret c="#333" s={11} /></button></NameBox>
        <FxBack><FxBox><Knob /><FxBtn aria-label="Insérer une fonction">f<small>x</small></FxBtn></FxBox></FxBack>
        <FormulaInput aria-label="Barre de formule" />
        <Expand aria-label="Développer"><svg width="12" height="9"><path d="M1 1l5 5 5-5" fill="none" stroke="#444" strokeWidth="3" /></svg></Expand>
      </FormulaBar>

      <Work>
        <Sheet>
          <Table>
            <colgroup><col className="num" />{cols.map((c) => <col key={c} />)}<col className="rest" /></colgroup>
            <thead><tr><Head aria-label="Tout sélectionner" />{cols.map((c) => <Head key={c} scope="col" $on={c === "D"}>{c}</Head>)}<Head /></tr></thead>
            <tbody>{Array.from({ length: 34 }, (_, i) => <SheetRow key={i} index={i + 1} />)}</tbody>
          </Table>
          <Cursor><CursorGrip /></Cursor>
          <Emblem><Logo /></Emblem>
          <Frame width="820" height="792"><rect x="5" y="5" width="809" height="780" fill="none" stroke="red" strokeWidth="6" strokeDasharray="24 18" /></Frame>
          <Watermark><strong>Activer Windows</strong><span>Accédez aux paramètres pour activer Windows.</span></Watermark>
          <Callout>
            <svg width="776" height="94"><path d="M281 2h492v90H281V76L2 73l279-18z" fill="#fff" stroke="#41719c" strokeWidth="3" /></svg>
            <p>Saisissez les informations</p>
          </Callout>
        </Sheet>
        <VBar>
          <VSplit />
          <ScrollBtn $w={24} $h={26} aria-label="Défiler vers le haut"><UpDown /></ScrollBtn>
          <VTrack><VThumb aria-label="Défilement vertical"><svg width="12" height="13"><path d="M0 1h12M0 5h12M0 9h12M0 12h12" stroke="#868c95" strokeWidth="1.4" /></svg></VThumb></VTrack>
          <ScrollBtn $w={24} $h={26} aria-label="Défiler vers le bas"><UpDown down /></ScrollBtn>
        </VBar>
        <Margin />
      </Work>

      <SheetBar>
        <NavSet>
          <ScrollBtn $w={23} $h={24} aria-label="Première feuille"><Arrow bar /></ScrollBtn>
          <ScrollBtn $w={23} $h={24} aria-label="Feuille précédente"><Arrow /></ScrollBtn>
          <ScrollBtn $w={23} $h={24} aria-label="Feuille suivante"><Arrow right /></ScrollBtn>
          <ScrollBtn $w={23} $h={24} aria-label="Dernière feuille"><Arrow bar right /></ScrollBtn>
        </NavSet>
        <SheetTab $w={80}><svg width="80" height="24"><path d="M0 0v20l3 3h76V0" fill="#e9ebef" stroke="#9aa1aa" /></svg>Feuil1</SheetTab>
        <SheetTab $w={82} $on><svg width="96" height="24"><path d="M0 0l3 20 4 3h68L95 0" fill="#fff" stroke="#9aa1aa" /><path d="M0 0h94" stroke="#fff" strokeWidth="3" /></svg>Feuil2</SheetTab>
        <SheetTab $w={78}><svg width="95" height="24"><path d="M14 0L-3 20l4 3h70L92 0" fill="#e9ebef" stroke="#9aa1aa" /></svg>Feuil3</SheetTab>
        <SheetTab $w={66} aria-label="Insérer une feuille"><svg width="70" height="24"><path d="M14 0L-1 20l4 3h42L66 0" fill="#e9ebef" stroke="#9aa1aa" /><path d="M22 5h16v14l-4 2H22z" fill="#d5e2f8" stroke="#4e6ca3" strokeWidth="1.6" /><path d="M21 2v12M15 8h12M17 4l8 8M25 4l-8 8" stroke="#e8962c" strokeWidth="1.6" /><circle cx="21" cy="8" r="2.4" fill="#fff2bd" /></svg></SheetTab>
        <HScroll>
          <HSplit />
          <ScrollBtn $w={25} $h={24} aria-label="Défiler à gauche"><Arrow /></ScrollBtn>
          <HTrack><HThumb aria-label="Défilement horizontal"><svg width="12" height="12"><path d="M1 0v12M4 0v12M8 0v12M11 0v12" stroke="#868c95" strokeWidth="1.4" /></svg></HThumb></HTrack>
          <ScrollBtn $w={25} $h={24} aria-label="Défiler à droite"><Arrow right /></ScrollBtn>
          <HSplit />
        </HScroll>
      </SheetBar>

      <Status>
        <StatusText>Sélectionnez une destination et appuyez sur ENTRÉE ou cliquez sur Coller</StatusText>
        <StatusRule />
        <Views>
          <StatusRule />
          <ViewBtn $on aria-label="Normal"><svg width="21" height="18" fill="#fff" stroke="#5a5a5a" strokeWidth="1.8"><path d="M1 1h19v16H1zM7 1v16M14 1v16M1 6h19M1 12h19" /></svg></ViewBtn>
          <ViewBtn aria-label="Mise en page"><svg width="22" height="20" stroke="#666" strokeWidth="2"><path d="M1 1h20v18H1z" fill="#b9bcc1" /><path d="M6 4h10v12H6z" fill="#fff" /><path d="M8 8h6M8 11h6" strokeWidth="1" /></svg></ViewBtn>
          <ViewBtn aria-label="Aperçu des sauts de page"><svg width="22" height="20" stroke="#666" strokeWidth="2"><path d="M1 1h20v18H1z" fill="#b9bcc1" /><path d="M2 2h5v10H2zM8 2h6v10H8z" fill="#fff" strokeWidth="1.4" /></svg></ViewBtn>
        </Views>
        <ZoomText>70 %</ZoomText>
        <ZoomSet>
          <Round aria-label="Zoom arrière"><svg width="12" height="12"><path d="M0 6h12" stroke="#444" strokeWidth="3" /></svg></Round>
          <Slider type="range" aria-label="Zoom" min="0" max="100" defaultValue="35" />
          <Round aria-label="Zoom avant"><svg width="12" height="12"><path d="M0 6h12M6 0v12" stroke="#444" strokeWidth="3" /></svg></Round>
        </ZoomSet>
      </Status>

      <Taskbar>
        <Start aria-label="Démarrer"><svg width="26" height="26" fill="#fff"><path d="M0 4l10-2v10H0zM12 2l14-2v12H12zM0 14h10v10L0 22zM12 14h14v12l-14-2z" /></svg></Start>
        <Search aria-label="Rechercher" placeholder="Rechercher sur le web et dans Windows" />
        <Apps>
          {apps.map(([name, state, art]) => (
            <AppButton key={name} aria-label={name} $run={state > 0} $on={state === 2}><svg width="34" height="36" viewBox="0 0 34 35">{art}</svg><i /></AppButton>
          ))}
        </Apps>
        <Tray>
          <TrayBtn aria-label="Icônes cachées"><svg width="20" height="12" fill="none" stroke="#fff" strokeWidth="2"><path d="M1 11l9-9 9 9" /></svg></TrayBtn>
          <TrayBtn aria-label="Batterie"><svg width="25" height="20" fill="none" stroke="#fff" strokeWidth="1.8"><path d="M11 4h11v3h2v6h-2v3H7v-4M1 3v4q3 4 6 0V3zM3 0v3M6 0v3M4 9v5h3" /></svg></TrayBtn>
          <TrayBtn aria-label="Réseau"><svg width="25" height="24" fill="none"><path d="M8 12Q12 3 24 1M12 16q3-7 12-9M16 20q2-6 8-7" stroke="#84878c" strokeWidth="2" /><rect x="20" y="17" width="4" height="5" fill="#999" /><circle cx="7" cy="17" r="7" fill="#dd2230" /><path d="M4 14l6 6M10 14l-6 6" stroke="#fff" strokeWidth="2" /></svg></TrayBtn>
          <TrayBtn aria-label="Volume"><svg width="27" height="24" fill="none" stroke="#fff" strokeWidth="1.8"><path d="M1 8h4l5-5v18l-5-5H1zM14 8q3 4 0 8M18 5q5 7 0 14M22 2q7 10 0 20" /></svg></TrayBtn>
          <TrayBtn aria-label="Notifications"><svg width="26" height="26"><path d="M0 1h26v18H17l-4 6-4-6H0z" fill="#fff" /><path d="M5 6h16M5 10h16M5 14h10" stroke="#05080e" strokeWidth="1.8" /></svg></TrayBtn>
          <Clock>21:27<br />11/10/2019</Clock>
          <Desk />
        </Tray>
      </Taskbar>
    </Shell>
  );
}
